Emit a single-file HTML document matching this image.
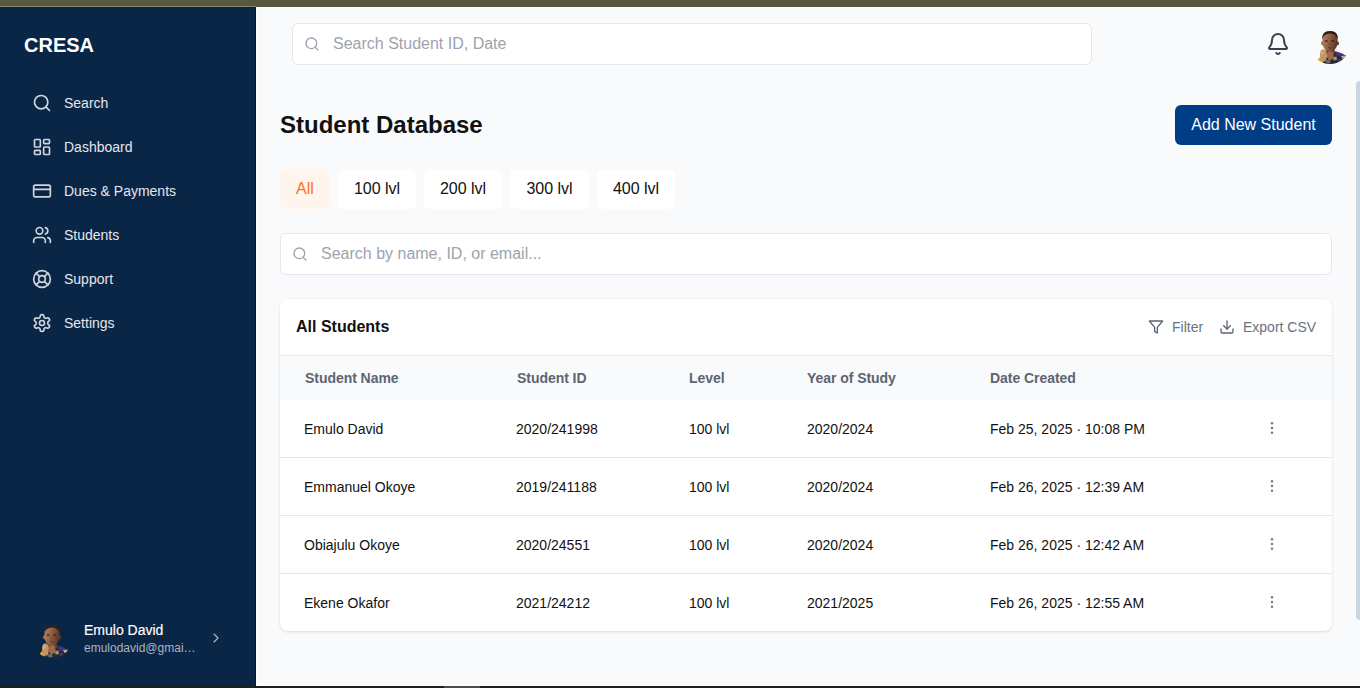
<!DOCTYPE html>
<html lang="en">
<head>
<meta charset="utf-8">
<title>CRESA - Student Database</title>
<style>
*{box-sizing:border-box;margin:0;padding:0}
html,body{width:1360px;height:688px;overflow:hidden;background:#f9fafb;font-family:"Liberation Sans",Arial,sans-serif;color:#111827}
.topbar{position:absolute;left:0;top:0;width:1360px;height:7px;background:#585840}
.topbar i{position:absolute;left:0;top:6px;width:256px;height:1px;background:#84846a}
.botbar{position:absolute;left:0;top:686px;width:1360px;height:2px;background:#1e1e1e}
.botbar i{position:absolute;left:444px;top:0;width:36px;height:2px;background:#4c4c4c}
.side{position:absolute;left:0;top:7px;width:256px;height:679px;background:#0a2647;color:#e5e7eb;box-shadow:inset -1px 0 0 #04193a}
.logo{position:absolute;left:24px;top:26px;font-size:20px;font-weight:700;color:#fff;line-height:24px}
.nav a{position:absolute;left:32px;height:20px;display:flex;align-items:center;font-size:14px;color:#e5e7eb;text-decoration:none;line-height:20px}
.nav svg{width:20px;height:20px;margin-right:12px;stroke:#d1d5db;fill:none;stroke-width:2;stroke-linecap:round;stroke-linejoin:round}
.user{position:absolute;left:0;top:611px;width:256px;height:50px}
.user .av{position:absolute;left:32px;top:0;width:40px;height:40px}
.user .nm{position:absolute;left:84px;top:4px;font-size:14px;line-height:16px;color:#fff;font-weight:400;-webkit-text-stroke:.15px #fff}
.user .em{position:absolute;left:84px;top:22px;font-size:12px;line-height:16px;color:#aab3c0}
.user svg.ch{position:absolute;left:208px;top:12px;width:16px;height:16px;stroke:#b4bcc8;fill:none;stroke-width:1.6;stroke-linecap:round;stroke-linejoin:round}
.main{position:absolute;left:256px;top:7px;width:1104px;height:679px;background:#f9fafb;box-shadow:inset 1px 1px 0 #fff,inset 0 -1px 0 #fff}
.search{position:absolute;background:#fff;border:1px solid #e5e7eb;border-radius:6px;font-size:16px;color:#9ca3af}
.search svg{position:absolute;width:16px;height:16px;stroke:#9ca3af;fill:none;stroke-width:2;stroke-linecap:round;stroke-linejoin:round}
.search span{position:absolute;line-height:20px}
h1{position:absolute;left:24px;top:102px;font-size:24px;font-weight:700;line-height:32px;color:#111}
.btn{position:absolute;left:919px;top:98px;width:157px;height:40px;background:#003d87;border-radius:6px;color:#fff;font-size:16px;line-height:40px;text-align:center}
.tab{position:absolute;top:162px;height:40px;border-radius:6px;background:#fff;font-size:16px;line-height:40px;text-align:center;color:#111}
.tab.on{background:#fff5ec;color:#f97316}
.card{position:absolute;left:24px;top:292px;width:1052px;height:332px;background:#fff;border-radius:8px;box-shadow:0 1px 3px rgba(0,0,0,.1),0 1px 2px -1px rgba(0,0,0,.1);overflow:hidden}
.card h2{position:absolute;left:16px;top:18px;font-size:16px;font-weight:700;line-height:20px;color:#111}
.act{position:absolute;top:18px;font-size:14px;line-height:20px;color:#6b7280}
.act svg{position:absolute;top:2px;width:16px;height:16px;stroke:#5b6472;fill:none;stroke-width:2;stroke-linecap:round;stroke-linejoin:round}
.thead{position:absolute;left:0;top:56px;width:1052px;height:45px;background:#f9fafb;border-top:1px solid #e5e7eb;font-size:14px;font-weight:700;color:#5d6573;letter-spacing:-.05px}
.thead span{position:absolute;top:14px;line-height:16px}
.row{position:absolute;left:0;width:1052px;height:58px;border-top:1px solid #e5e7eb;font-size:14px;color:#111}
.row span{position:absolute;top:21px;line-height:16px;white-space:pre}
.row svg{position:absolute;left:984px;top:20px;width:16px;height:16px;fill:#747d8c}
.sb{position:absolute;left:1356px;top:80.5px;width:8px;height:539.5px;background:#c9d6e1;border-radius:4px}
</style>
</head>
<body>
<div class="topbar"><i></i></div>
<div class="side">
  <div class="logo">CRESA</div>
  <div class="nav">
    <a style="top:86px"><svg viewBox="0 0 24 24"><circle cx="11" cy="11" r="8"/><path d="m21 21-4.3-4.3"/></svg>Search</a>
    <a style="top:130px"><svg viewBox="0 0 24 24"><rect x="3" y="3" width="7" height="9" rx="1"/><rect x="14" y="3" width="7" height="5" rx="1"/><rect x="14" y="12" width="7" height="9" rx="1"/><rect x="3" y="16" width="7" height="5" rx="1"/></svg>Dashboard</a>
    <a style="top:174px"><svg viewBox="0 0 24 24"><rect x="2" y="5" width="20" height="14" rx="2"/><path d="M2 10h20"/></svg>Dues &amp; Payments</a>
    <a style="top:218px"><svg viewBox="0 0 24 24"><path d="M16 21v-2a4 4 0 0 0-4-4H6a4 4 0 0 0-4 4v2"/><circle cx="9" cy="7" r="4"/><path d="M22 21v-2a4 4 0 0 0-3-3.87"/><path d="M16 3.13a4 4 0 0 1 0 7.75"/></svg>Students</a>
    <a style="top:262px"><svg viewBox="0 0 24 24"><circle cx="12" cy="12" r="10"/><circle cx="12" cy="12" r="4"/><path d="m4.93 4.93 4.24 4.24"/><path d="m14.83 9.17 4.24-4.24"/><path d="m14.83 14.83 4.24 4.24"/><path d="m9.17 14.83-4.24 4.24"/></svg>Support</a>
    <a style="top:306px"><svg viewBox="0 0 24 24"><path d="M12.22 2h-.44a2 2 0 0 0-2 2v.18a2 2 0 0 1-1 1.73l-.43.25a2 2 0 0 1-2 0l-.15-.08a2 2 0 0 0-2.73.73l-.22.38a2 2 0 0 0 .73 2.73l.15.1a2 2 0 0 1 1 1.72v.51a2 2 0 0 1-1 1.74l-.15.09a2 2 0 0 0-.73 2.73l.22.38a2 2 0 0 0 2.73.73l.15-.08a2 2 0 0 1 2 0l.43.25a2 2 0 0 1 1 1.73V20a2 2 0 0 0 2 2h.44a2 2 0 0 0 2-2v-.18a2 2 0 0 1 1-1.73l.43-.25a2 2 0 0 1 2 0l.15.08a2 2 0 0 0 2.73-.73l.22-.39a2 2 0 0 0-.73-2.73l-.15-.08a2 2 0 0 1-1-1.74v-.5a2 2 0 0 1 1-1.74l.15-.09a2 2 0 0 0 .73-2.73l-.22-.38a2 2 0 0 0-2.73-.73l-.15.08a2 2 0 0 1-2 0l-.43-.25a2 2 0 0 1-1-1.73V4a2 2 0 0 0-2-2z"/><circle cx="12" cy="12" r="3"/></svg>Settings</a>
  </div>
  <div class="user">
    <svg class="av" viewBox="0 0 40 40"><defs><clipPath id="c1"><circle cx="20" cy="20" r="20"/></clipPath><filter id="f1" x="-10%" y="-10%" width="120%" height="120%"><feGaussianBlur stdDeviation="0.5"/></filter><linearGradient id="g1" x1="0" y1="0" x2="1" y2="0.25"><stop offset="0" stop-color="#b98562"/><stop offset="0.45" stop-color="#96644a"/><stop offset="1" stop-color="#5e3a2c"/></linearGradient></defs><g clip-path="url(#c1)"><g filter="url(#f1)"><path d="M22 29 L25 27.3 L31 29.3 L36.3 31.8 L38 41 L12 41 L14 35Z" fill="#2a2736"/><path d="M25.5 27.6 L31 29.3 L33.5 30.6 L30 33 L26 31Z" fill="#43357c"/><path d="M31 32 L35.5 31.6 L36.5 34.5 L32.5 35Z" fill="#b4ac93"/><path d="M23 33 L26.5 32.5 L27 36 L23.5 36.5Z" fill="#9c937f"/><path d="M28 35.5 L31 35 L31.5 38 L28.5 38.5Z" fill="#4a4370"/><path d="M16 36 L20 35.5 L20.5 39 L16.5 39.5Z" fill="#6e6a66"/><path d="M7 36.8 L9.5 33.6 L12.6 33 L13 38.5 L8 39Z" fill="#e5a820"/><path d="M15.5 22 L24.5 22 L25 30 L16 31Z" fill="#6a4230"/><ellipse cx="12.2" cy="19.3" rx="1.1" ry="2.1" fill="#a06f52"/><ellipse cx="27.8" cy="19.3" rx="1.1" ry="2.1" fill="#5d392b"/><path d="M12.4 14 Q12.2 7.2 20 7.2 Q27.8 7.2 27.6 14 L27.5 19 Q27.3 23.5 24 26 Q21.5 27.6 20 27.6 Q18 27.6 16 26 Q12.7 23.5 12.5 19Z" fill="url(#g1)"/><path d="M12.3 15.5 Q11.8 7.1 20 7.1 Q28.2 7.1 27.7 15.5 Q26.9 10 20 9.4 Q13.2 10 12.3 15.5Z" fill="#2b1c17"/><ellipse cx="16.2" cy="16.9" rx="1.7" ry="0.75" fill="#3a241c"/><ellipse cx="22.8" cy="16.9" rx="1.7" ry="0.75" fill="#2e1c17"/><path d="M19 18 L20.3 18 L20.8 21.6 L18.6 21.6Z" fill="#7a4e3a"/><ellipse cx="19.8" cy="23.7" rx="2.4" ry="0.8" fill="#6a3c32"/><ellipse cx="20.2" cy="31.6" rx="3.3" ry="4.4" fill="#9c6746"/><path d="M10 31 Q9.8 25.6 13 25.2 Q16.6 25.4 16.9 30 Q17 35 15.5 37.5 L11 37.5 Q10 34 10 31Z" fill="#c39463"/><ellipse cx="12.4" cy="29" rx="1.6" ry="1.9" fill="#d8a888"/></g></g></svg>
    <div class="nm">Emulo David</div>
    <div class="em">emulodavid@gmai…</div>
    <svg class="ch" viewBox="0 0 24 24"><path d="m9 18 6-6-6-6"/></svg>
  </div>
</div>
<div class="main">
  <div class="search" style="left:36px;top:16px;width:800px;height:42px"><svg style="left:11px;top:12px" viewBox="0 0 24 24"><circle cx="11" cy="11" r="8"/><path d="m21 21-4.3-4.3"/></svg><span style="left:40px;top:10px">Search Student ID, Date</span></div>
  <svg style="position:absolute;left:1010px;top:25px;width:24px;height:24px;stroke:#374151;fill:none;stroke-width:2;stroke-linecap:round;stroke-linejoin:round" viewBox="0 0 24 24"><path d="M10.268 21a2 2 0 0 0 3.464 0"/><path d="M3.262 15.326A1 1 0 0 0 4 17h16a1 1 0 0 0 .74-1.673C19.41 13.956 18 12.499 18 8A6 6 0 0 0 6 8c0 4.499-1.411 5.956-2.738 7.326"/></svg>
  <svg style="position:absolute;left:1054px;top:17px;width:40px;height:40px" viewBox="0 0 40 40"><defs><clipPath id="c2"><circle cx="20" cy="20" r="20"/></clipPath><filter id="f2" x="-10%" y="-10%" width="120%" height="120%"><feGaussianBlur stdDeviation="0.5"/></filter><linearGradient id="g2" x1="0" y1="0" x2="1" y2="0.25"><stop offset="0" stop-color="#b98562"/><stop offset="0.45" stop-color="#96644a"/><stop offset="1" stop-color="#5e3a2c"/></linearGradient></defs><g clip-path="url(#c2)"><g filter="url(#f2)"><path d="M22 29 L25 27.3 L31 29.3 L36.3 31.8 L38 41 L12 41 L14 35Z" fill="#2a2736"/><path d="M25.5 27.6 L31 29.3 L33.5 30.6 L30 33 L26 31Z" fill="#43357c"/><path d="M31 32 L35.5 31.6 L36.5 34.5 L32.5 35Z" fill="#b4ac93"/><path d="M23 33 L26.5 32.5 L27 36 L23.5 36.5Z" fill="#9c937f"/><path d="M28 35.5 L31 35 L31.5 38 L28.5 38.5Z" fill="#4a4370"/><path d="M16 36 L20 35.5 L20.5 39 L16.5 39.5Z" fill="#6e6a66"/><path d="M7 36.8 L9.5 33.6 L12.6 33 L13 38.5 L8 39Z" fill="#e5a820"/><path d="M15.5 22 L24.5 22 L25 30 L16 31Z" fill="#6a4230"/><ellipse cx="12.2" cy="19.3" rx="1.1" ry="2.1" fill="#a06f52"/><ellipse cx="27.8" cy="19.3" rx="1.1" ry="2.1" fill="#5d392b"/><path d="M12.4 14 Q12.2 7.2 20 7.2 Q27.8 7.2 27.6 14 L27.5 19 Q27.3 23.5 24 26 Q21.5 27.6 20 27.6 Q18 27.6 16 26 Q12.7 23.5 12.5 19Z" fill="url(#g2)"/><path d="M12.3 15.5 Q11.8 7.1 20 7.1 Q28.2 7.1 27.7 15.5 Q26.9 10 20 9.4 Q13.2 10 12.3 15.5Z" fill="#2b1c17"/><ellipse cx="16.2" cy="16.9" rx="1.7" ry="0.75" fill="#3a241c"/><ellipse cx="22.8" cy="16.9" rx="1.7" ry="0.75" fill="#2e1c17"/><path d="M19 18 L20.3 18 L20.8 21.6 L18.6 21.6Z" fill="#7a4e3a"/><ellipse cx="19.8" cy="23.7" rx="2.4" ry="0.8" fill="#6a3c32"/><ellipse cx="20.2" cy="31.6" rx="3.3" ry="4.4" fill="#9c6746"/><path d="M10 31 Q9.8 25.6 13 25.2 Q16.6 25.4 16.9 30 Q17 35 15.5 37.5 L11 37.5 Q10 34 10 31Z" fill="#c39463"/><ellipse cx="12.4" cy="29" rx="1.6" ry="1.9" fill="#d8a888"/></g></g></svg>
  <h1>Student Database</h1>
  <div class="btn">Add New Student</div>
  <div class="tab on" style="left:24px;width:50px">All</div>
  <div class="tab" style="left:82px;width:78px">100 lvl</div>
  <div class="tab" style="left:168px;width:78px">200 lvl</div>
  <div class="tab" style="left:254px;width:79px">300 lvl</div>
  <div class="tab" style="left:341px;width:78px">400 lvl</div>
  <div class="search" style="left:24px;top:226px;width:1052px;height:42px"><svg style="left:11px;top:12px" viewBox="0 0 24 24"><circle cx="11" cy="11" r="8"/><path d="m21 21-4.3-4.3"/></svg><span style="left:40px;top:10px">Search by name, ID, or email...</span></div>
  <div class="card">
    <h2>All Students</h2>
    <div class="act" style="left:892px"><svg style="left:-24px" viewBox="0 0 24 24"><path d="M22 3H2l8 9.46V19l4 2v-8.54L22 3z"/></svg>Filter</div>
    <div class="act" style="left:963px"><svg style="left:-24px" viewBox="0 0 24 24"><path d="M21 15v4a2 2 0 0 1-2 2H5a2 2 0 0 1-2-2v-4"/><path d="m7 10 5 5 5-5"/><path d="M12 15V3"/></svg>Export CSV</div>
    <div class="thead"><span style="left:25px">Student Name</span><span style="left:237px">Student ID</span><span style="left:409px">Level</span><span style="left:527px">Year of Study</span><span style="left:710px">Date Created</span></div>
    <div class="row" style="top:100px;border-top-color:transparent"><span style="left:24px">Emulo David</span><span style="left:236px">2020/241998</span><span style="left:409px">100 lvl</span><span style="left:527px">2020/2024</span><span style="left:710px">Feb 25, 2025 · 10:08 PM</span><svg viewBox="0 0 16 16"><circle cx="8" cy="3.33" r="1.25"/><circle cx="8" cy="8" r="1.25"/><circle cx="8" cy="12.67" r="1.25"/></svg></div>
    <div class="row" style="top:158px"><span style="left:24px">Emmanuel Okoye</span><span style="left:236px">2019/241188</span><span style="left:409px">100 lvl</span><span style="left:527px">2020/2024</span><span style="left:710px">Feb 26, 2025 · 12:39 AM</span><svg viewBox="0 0 16 16"><circle cx="8" cy="3.33" r="1.25"/><circle cx="8" cy="8" r="1.25"/><circle cx="8" cy="12.67" r="1.25"/></svg></div>
    <div class="row" style="top:216px"><span style="left:24px">Obiajulu Okoye</span><span style="left:236px">2020/24551</span><span style="left:409px">100 lvl</span><span style="left:527px">2020/2024</span><span style="left:710px">Feb 26, 2025 · 12:42 AM</span><svg viewBox="0 0 16 16"><circle cx="8" cy="3.33" r="1.25"/><circle cx="8" cy="8" r="1.25"/><circle cx="8" cy="12.67" r="1.25"/></svg></div>
    <div class="row" style="top:274px"><span style="left:24px">Ekene Okafor</span><span style="left:236px">2021/24212</span><span style="left:409px">100 lvl</span><span style="left:527px">2021/2025</span><span style="left:710px">Feb 26, 2025 · 12:55 AM</span><svg viewBox="0 0 16 16"><circle cx="8" cy="3.33" r="1.25"/><circle cx="8" cy="8" r="1.25"/><circle cx="8" cy="12.67" r="1.25"/></svg></div>
  </div>
</div>
<div class="sb"></div>
<div class="botbar"><i></i></div>
</body>
</html>
